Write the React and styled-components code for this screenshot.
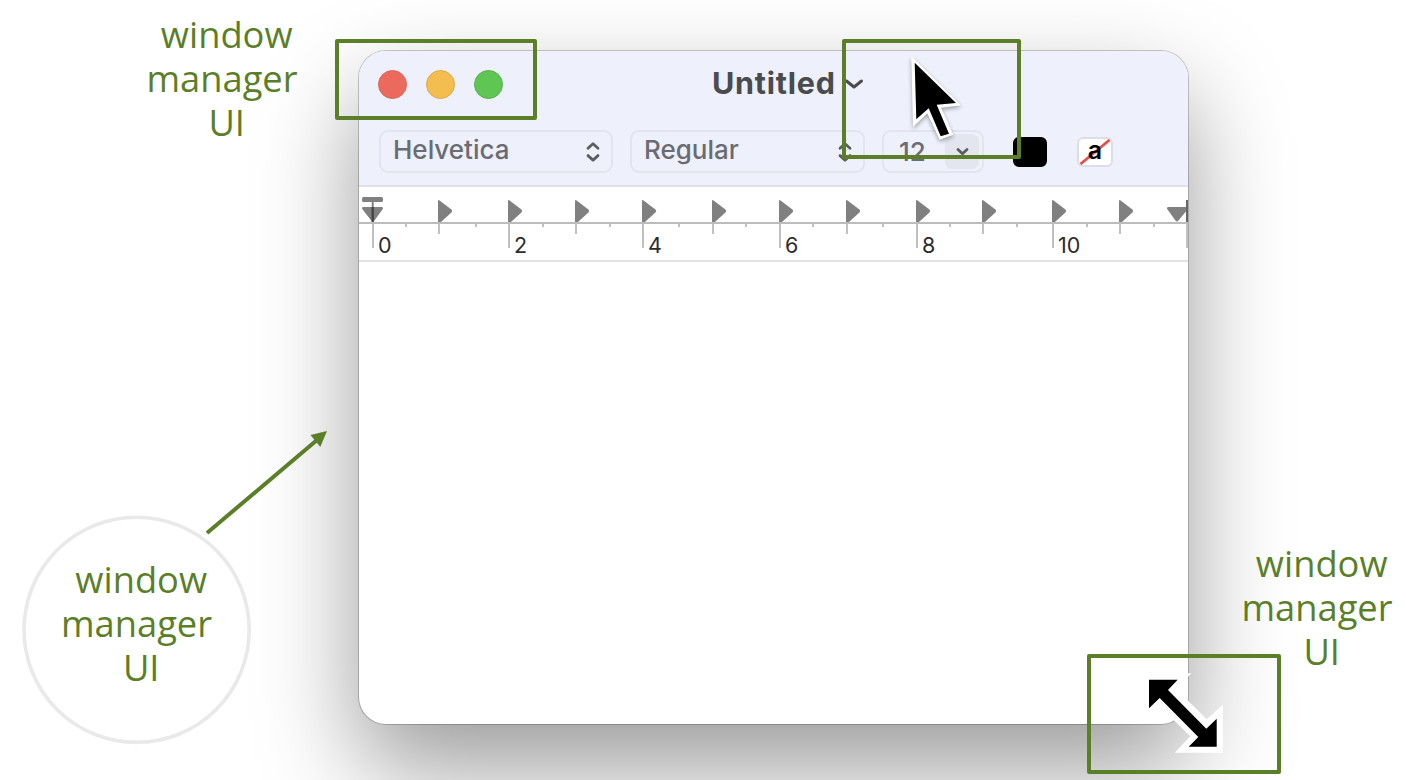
import React from "react";
import styled, { createGlobalStyle } from "styled-components";

const GREEN = "#5b7f28";

const GlobalStyle = createGlobalStyle`
  * { box-sizing: border-box; }
  body { margin: 0; background: #fff; overflow: hidden; }
`;

const Stage = styled.main`
  position: relative;
  width: 1406px;
  height: 780px;
  padding: 51px 0 0 359px;
  overflow: hidden;
  background: #fff;
  font-family: Inter, "Liberation Sans", sans-serif;
`;

const Window = styled.section`
  display: flex;
  flex-direction: column;
  width: 829px;
  height: 673px;
  border-radius: 27px;
  background: #fff;
  box-shadow: 0 0 0 1px rgba(0, 0, 0, 0.2), 0 44px 100px rgba(0, 0, 0, 0.4);
`;

const Header = styled.header`
  height: 136px;
  border-bottom: 2px solid #e0e1e6;
  border-radius: 27px 27px 0 0;
  background: #eef1fb;
`;

const TitleBar = styled.div`
  display: flex;
  align-items: center;
  height: 67px;
  padding-left: 19px;
`;

const Lights = styled.div`
  display: flex;
  gap: 19px;
`;

const Light = styled.span`
  width: 29px;
  height: 29px;
  border-radius: 50%;
  border: 1px solid ${(p) => p.$edge};
  background: ${(p) => p.$color};
`;

const Title = styled.h1`
  display: flex;
  align-items: center;
  gap: 8px;
  margin: -3px 0 0 209px;
  font-size: 30.5px;
  line-height: 36px;
  font-weight: 700;
  letter-spacing: 0.75px;
  color: #4a4b4e;
`;

const Toolbar = styled.div`
  display: flex;
  align-items: center;
  height: 67px;
  padding-left: 20px;
`;

const Field = styled.div`
  display: flex;
  align-items: center;
  justify-content: space-between;
  width: ${(p) => p.$width}px;
  height: 43px;
  margin-right: 17px;
  padding: 0 ${(p) => p.$end}px ${(p) => (p.$compact ? 0 : 2)}px ${(p) => (p.$compact ? 15 : 12)}px;
  border: 2px solid #e2e4ee;
  border-radius: 9px;
  font-size: 26px;
  font-weight: 450;
  letter-spacing: 0;
  color: #6a6b73;
`;

const FieldText = styled.span`
  margin-top: -2px;
`;

const StepButton = styled.span`
  display: flex;
  align-items: center;
  justify-content: center;
  width: 34px;
  height: 35px;
  border-radius: 7px;
  background: #e3e6ef;
`;

const Swatch = styled.span`
  display: flex;
  position: relative;
  align-items: center;
  justify-content: center;
  width: ${(p) => p.$width}px;
  height: 30px;
  margin-left: ${(p) => p.$gap}px;
  border: 2px solid ${(p) => p.$edge};
  border-radius: 6px;
  background: ${(p) => p.$fill};
  color: #000;
  font-size: 25px;
  font-weight: 600;
  line-height: 20px;
  padding-bottom: 3px;
`;

const Slash = styled.svg`
  position: absolute;
  inset: 0;
  width: 100%;
  height: 100%;
`;

const Glyph = styled.span`
  position: relative;
`;

const Ruler = styled.div`
  display: flex;
  height: 75px;
  border-bottom: 2px solid #e3e3e3;
  overflow: hidden;
`;

const Cell = styled.div`
  flex: none;
  width: ${(p) => p.$width}px;
`;

const Markers = styled.div`
  height: 37px;
  border-bottom: 2px solid #bcbcbc;
`;

const MarkerIcon = styled.svg`
  display: block;
  overflow: visible;
`;

const Scale = styled.div`
  display: grid;
  grid-template-columns: ${(p) => p.$half}px 1fr;
`;

const TickGroup = styled.div`
  display: flex;
  align-items: flex-start;
`;

const Tick = styled.span`
  flex: none;
  width: 2px;
  height: ${(p) => p.$length}px;
  background: #c0c0c0;
`;

const Numeral = styled.span`
  margin: 8px 0 0 4px;
  font-size: 21.5px;
  font-weight: 400;
  line-height: 27px;
  color: #2c2c2c;
`;

const Caption = styled.p`
  position: absolute;
  left: ${(p) => p.$x}px;
  top: ${(p) => p.$y}px;
  width: 170px;
  margin: 0;
  font: 400 36.3px/44px "Open Sans", sans-serif;
  text-align: center;
  white-space: pre;
  color: ${GREEN};
`;

const Callout = styled.div`
  position: absolute;
  left: ${(p) => p.$x}px;
  top: ${(p) => p.$y}px;
  width: ${(p) => p.$w}px;
  height: ${(p) => p.$h}px;
  border: 4px solid ${GREEN};
  border-radius: 2px;
`;

const Overlay = styled.svg`
  position: absolute;
  left: 0;
  top: 0;
  pointer-events: none;
`;

const PointerShape = styled.g`
  filter: drop-shadow(0 2px 2px rgba(0, 0, 0, 0.35));
`;

const UpDown = () => (
  <svg width="14" height="22" viewBox="0 0 14 22" fill="none" stroke="#5c5d63" strokeWidth="2.8" strokeLinecap="round" strokeLinejoin="round">
    <path d="M2 8.2 7 3.7l5 4.5M2 15.6l5 4.5 5-4.5" />
  </svg>
);

const RULER = [
  { width: 66, half: 33, label: "0" },
  { width: 70, half: 37 },
  { width: 67, half: 34, label: "2" },
  { width: 67, half: 34 },
  { width: 70, half: 36, label: "4" },
  { width: 67, half: 33 },
  { width: 67, half: 33, label: "6" },
  { width: 70, half: 36 },
  { width: 66, half: 33, label: "8" },
  { width: 70, half: 34 },
  { width: 67, half: 34, label: "10" },
  { width: 67, half: 34 },
];

const TabStop = () => (
  <MarkerIcon width="16" height="35" viewBox="0 0 16 35">
    <path d="M0 14.2Q0 12.5 1.6 13.4L13.4 22.5Q15 24 13.4 25.6L3 35H0Z" fill="#808080" />
  </MarkerIcon>
);

const IndentStop = () => (
  <MarkerIcon width="16" height="35" viewBox="0 0 16 35">
    <rect x="-10" y="10" width="21" height="5" rx="1.5" fill="#808080" />
    <path d="M-8.5 20H9.5Q12 20.4 10.4 22.5L2.5 33.5Q1 35.5 -.8 33.5L-9.4 22.5Q-11 20.4 -8.5 20Z" fill="#808080" />
    <path d="M.7 15V20" stroke="#808080" strokeWidth="2" />
    <path d="M.7 20V35" stroke="#444" strokeWidth="2.4" />
  </MarkerIcon>
);

const EndStop = () => (
  <MarkerIcon width="2" height="35" viewBox="0 0 2 35">
    <path d="M-17.5 20H2V22L-7.5 33.5Q-9 35.5 -10.6 33.5L-18.5 22.5Q-20 20.4 -17.5 20Z" fill="#808080" />
    <path d="M1 13V35" stroke="#666" strokeWidth="2" />
  </MarkerIcon>
);

const CAPTION = " window\nmanager\n UI";

export default function App() {
  return (
    <Stage>
      <GlobalStyle />
      <Window>
        <Header>
          <TitleBar>
            <Lights>
              <Light $color="#ec695d" $edge="#d9665b" />
              <Light $color="#f3be4f" $edge="#dcaa4b" />
              <Light $color="#5fc653" $edge="#58b04d" />
            </Lights>
            <Title>
              Untitled
              <svg width="20" height="12" viewBox="0 0 20 12" fill="none" stroke="#4a4b4e" strokeWidth="3" strokeLinecap="round" strokeLinejoin="round">
                <path d="M2.5 4l7.5 6 7.5-6" />
              </svg>
            </Title>
          </TitleBar>
          <Toolbar>
            <Field $width={234} $end={11}><FieldText>Helvetica</FieldText><UpDown /></Field>
            <Field $width={235} $end={11}><FieldText>Regular</FieldText><UpDown /></Field>
            <Field $width={102} $end={3} $compact>
              12
              <StepButton>
                <svg width="13" height="9" viewBox="0 0 13 9" fill="none" stroke="#5c5d63" strokeWidth="2.8" strokeLinecap="round" strokeLinejoin="round">
                  <path d="M2 2.5l4.5 4.3L11 2.5" />
                </svg>
              </StepButton>
            </Field>
            <Swatch $width={34} $gap={12} $fill="#000" $edge="#000" />
            <Swatch $width={36} $gap={30} $fill="#fff" $edge="#dddee3">
              <Slash viewBox="0 0 32 26">
                <path d="M1.5 25 30.5 1" stroke="#e5504b" strokeWidth="2.8" />
              </Slash>
              <Glyph>a</Glyph>
            </Swatch>
          </Toolbar>
        </Header>
        <Ruler>
          <Cell $width={13}><Markers /></Cell>
          {RULER.map(({ width, half, label }, i) => (
            <Cell key={i} $width={width}>
              <Markers>{i === 0 ? <IndentStop /> : <TabStop />}</Markers>
              <Scale $half={half}>
                <TickGroup>
                  <Tick $length={label ? 24 : 10} />
                  {label && <Numeral>{label}</Numeral>}
                </TickGroup>
                <Tick $length={3} />
              </Scale>
            </Cell>
          ))}
          <Cell $width={2}>
            <Markers><EndStop /></Markers>
            <Tick as="div" $length={24} />
          </Cell>
        </Ruler>
      </Window>

      <Caption $x={137} $y={12}>{CAPTION}</Caption>
      <Caption $x={51.5} $y={557}>{CAPTION}</Caption>
      <Caption $x={1232} $y={541}>{CAPTION}</Caption>
      <Callout $x={335} $y={39} $w={202} $h={81} />
      <Callout $x={842} $y={39} $w={179} $h={120} />
      <Callout $x={1087} $y={654} $w={194} $h={120} />
      <Overlay width="1406" height="780" viewBox="0 0 1406 780">
        <circle cx="136.6" cy="629.8" r="112.6" fill="none" stroke="#e9e9e9" strokeWidth="3.6" />
        <path d="M207 533 317 440" stroke={GREEN} strokeWidth="4" />
        <path d="M327 431 310.5 435 320.3 447Z" fill={GREEN} />
        <PointerShape>
          <path d="M911.3 56 961 105.3 941 107.7 953.3 134.7 939.7 139.7 927.3 113.3 913 127Z" fill="#fff" />
        </PointerShape>
        <path d="M914.7 62.7 956 103 936.7 104.7 949 133.7 940.7 136.3 928.7 108.3 916.3 119.3Z" fill="#000" />
        <path d="M1143.3 673.3H1191.3L1176.5 689.3 1206.7 719.3 1223 704.7V752.7H1174.7L1190.3 736.3 1159.7 706.3 1143.3 721.7Z" fill="#fff" />
        <path d="M1149 679.7H1177.7L1168 690 1206.3 728.7 1216.7 718.7V746.7H1188.7L1198.3 737 1159.7 698 1149 708.3Z" fill="#000" />
      </Overlay>
    </Stage>
  );
}
